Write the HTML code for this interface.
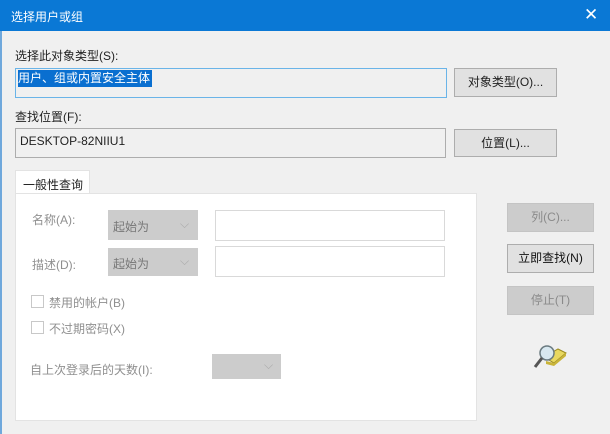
<html><head><style>
body{margin:0;width:610px;height:434px;overflow:hidden;background:#f0f0f0;font-family:"Liberation Sans","Noto Sans CJK SC",sans-serif;font-size:12px;color:#222;position:relative}
.a{position:absolute}
.title{left:0;top:0;width:610px;height:31px;background:#0a78d5;color:#fff}
.btn{background:#e1e1e1;border:1px solid #adadad;box-sizing:border-box;text-align:center}
.dis{background:#cccccc;border:1px solid #c4c4c4;color:#8a8a8a;box-sizing:border-box;text-align:center}
.tb{background:#fff;border:1px solid #d9d9d9;box-sizing:border-box}
.g{color:#8f8f8f}
.cb{width:11px;height:11px;border:1px solid #c8c8c8;background:#fff}
.combo{background:#cccccc;color:#777}
</style></head><body>
<div class="a" style="left:0;top:0;width:2px;height:434px;background:#6fa8dc"></div>
<div class="a title"><span class="a" style="left:11px;top:8px;font-size:12px">选择用户或组</span><span class="a" style="left:584px;top:5px;font-size:17px">✕</span></div>
<div class="a" style="left:15px;top:47px">选择此对象类型(S):</div>
<div class="a" style="left:15px;top:68px;width:432px;height:30px;background:#f0f0f0;border:1px solid #6ab4e8;box-sizing:border-box"></div>
<div class="a" style="left:18px;top:70px;width:134px;height:17px;background:#0a6fd0;color:#fff;line-height:17px">用户、组或内置安全主体</div>
<div class="a btn" style="left:454px;top:68px;width:103px;height:29px;line-height:27px">对象类型(O)...</div>
<div class="a" style="left:15px;top:108px">查找位置(F):</div>
<div class="a" style="left:15px;top:128px;width:431px;height:30px;border:1px solid #adadad;box-sizing:border-box;padding:5px 4px">DESKTOP-82NIIU1</div>
<div class="a btn" style="left:454px;top:129px;width:103px;height:28px;line-height:26px">位置(L)...</div>
<div class="a" style="left:15px;top:170px;width:75px;height:24px;background:#fff;border:1px solid #e3e3e3;border-bottom:none;box-sizing:border-box;padding:5px 0 0 7px">一般性查询</div>
<div class="a" style="left:15px;top:193px;width:462px;height:228px;background:#fff;border:1px solid #e3e3e3;box-sizing:border-box"></div>
<div class="a g" style="left:32px;top:211px">名称(A):</div>
<div class="a combo" style="left:108px;top:210px;width:90px;height:30px"><span class="a" style="left:5px;top:8px">起始为</span><span class="a" style="left:72px;top:7px;color:#aaa">⌵</span></div>
<div class="a tb" style="left:215px;top:210px;width:230px;height:31px"></div>
<div class="a g" style="left:32px;top:256px">描述(D):</div>
<div class="a combo" style="left:108px;top:248px;width:90px;height:28px"><span class="a" style="left:5px;top:7px">起始为</span><span class="a" style="left:72px;top:6px;color:#aaa">⌵</span></div>
<div class="a tb" style="left:215px;top:246px;width:230px;height:31px"></div>
<div class="a cb" style="left:31px;top:295px"></div><div class="a g" style="left:49px;top:294px">禁用的帐户(B)</div>
<div class="a cb" style="left:31px;top:321px"></div><div class="a g" style="left:49px;top:320px">不过期密码(X)</div>
<div class="a g" style="left:30px;top:361px">自上次登录后的天数(I):</div>
<div class="a combo" style="left:212px;top:354px;width:69px;height:25px"><span class="a" style="left:52px;top:4px;color:#aaa">⌵</span></div>
<div class="a dis" style="left:507px;top:203px;width:87px;height:29px;line-height:27px">列(C)...</div>
<div class="a btn" style="left:507px;top:244px;width:87px;height:29px;line-height:27px;color:#111">立即查找(N)</div>
<div class="a dis" style="left:507px;top:286px;width:87px;height:29px;line-height:27px">停止(T)</div>
<svg class="a" style="left:532px;top:343px" width="36" height="28" viewBox="0 0 36 28">
<path d="M12 14 L26 6 L34 10 L22 20 Z" fill="#e8d860" stroke="#9a8a20"/>
<path d="M14 18 L22 20 L34 10 L34 13 L22 23 L14 21Z" fill="#c9b43a"/>
<circle cx="15" cy="10" r="7" fill="#d8e8f0" stroke="#6a7a80" stroke-width="1.5"/>
<path d="M10 15 L3 24" stroke="#555" stroke-width="3"/>
</svg>
</body></html>
